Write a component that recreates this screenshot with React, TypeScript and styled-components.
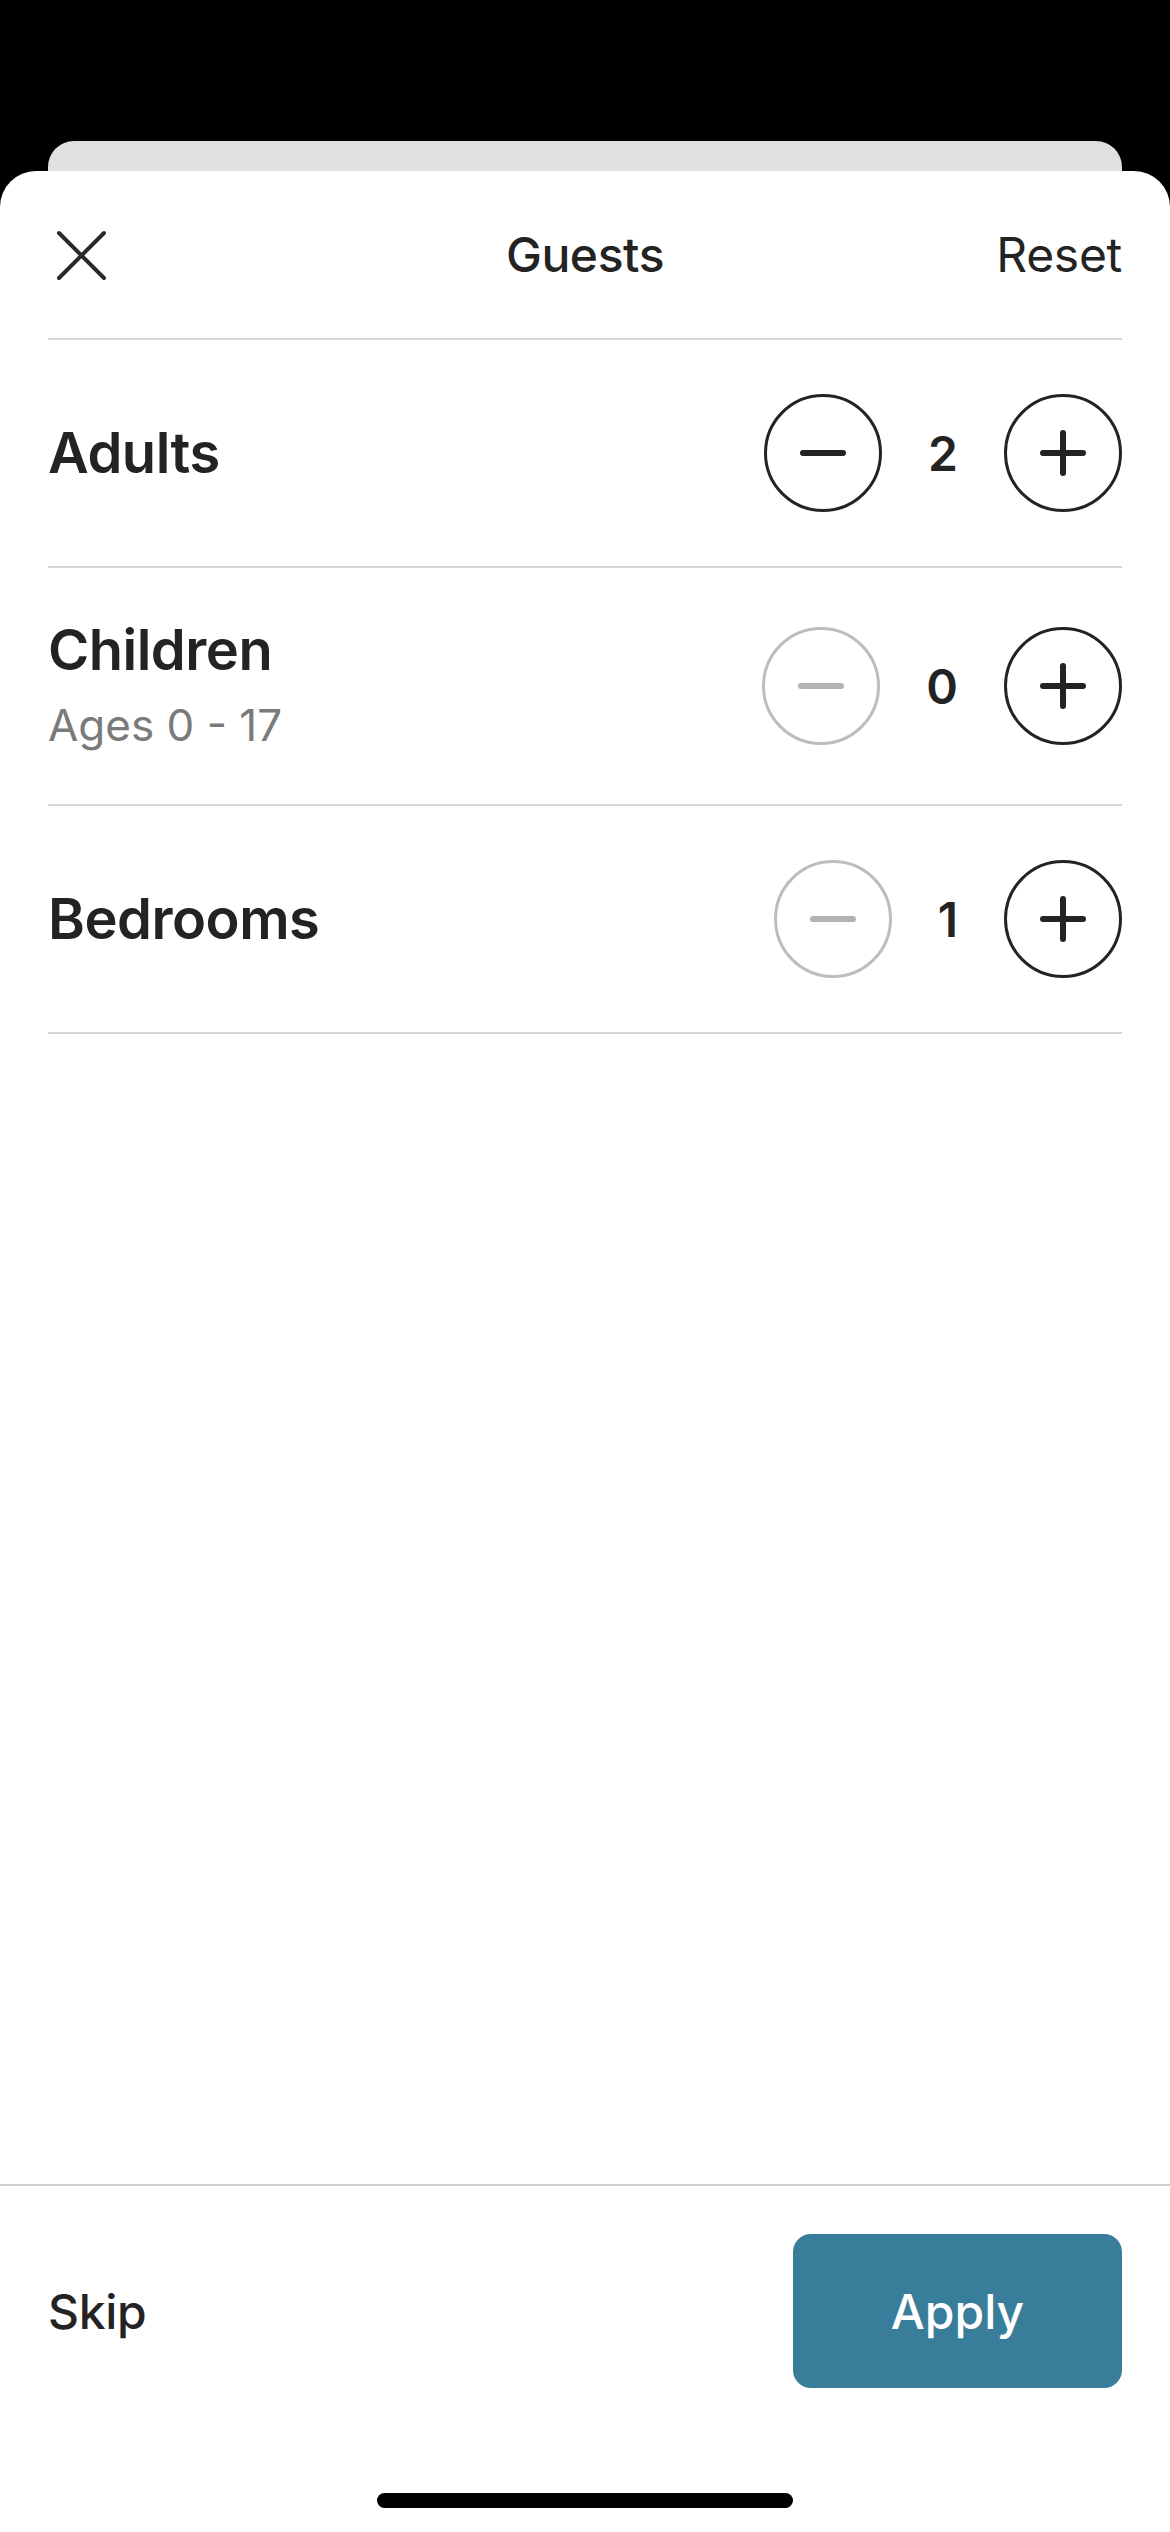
import React, { useState } from "react";
import styled, { createGlobalStyle } from "styled-components";

const GlobalStyle = createGlobalStyle`
  * {
    box-sizing: border-box;
  }
  body {
    margin: 0;
    background: #000;
    font-family: Inter, "Noto Sans", "Liberation Sans", sans-serif;
    color: #232323;
  }
`;

const Page = styled.div`
  min-height: 100vh;
  display: flex;
  flex-direction: column;
  padding-top: 141px;
  background: #000;
`;

const BackCard = styled.div`
  height: 30px;
  margin: 0 48px;
  background: #e0e0e0;
  border-radius: 26px 26px 0 0;
`;

const Sheet = styled.div`
  flex: 1;
  display: flex;
  flex-direction: column;
  background: #fff;
  border-radius: 36px 36px 0 0;
`;

const Header = styled.header`
  height: 169px;
  margin: 0 48px;
  display: grid;
  grid-template-columns: 1fr auto 1fr;
  align-items: center;
  border-bottom: 2px solid #d6d6d6;
`;

const CloseButton = styled.button`
  width: 60px;
  height: 60px;
  padding: 0;
  border: none;
  background: none;
  display: flex;
  justify-self: start;
  cursor: pointer;
`;

const Title = styled.h1`
  margin: 0;
  font-size: 48px;
  font-weight: 550;
  letter-spacing: -0.4px;
`;

const TextButton = styled.button<{ $strong?: boolean }>`
  padding: 0;
  border: none;
  background: none;
  font-family: inherit;
  font-size: 48px;
  font-weight: ${(p) => (p.$strong ? 500 : 400)};
  color: #232323;
  letter-spacing: -0.3px;
  cursor: pointer;
  justify-self: end;
`;

const Row = styled.div`
  margin: 0 48px;
  padding: 54px 0;
  display: flex;
  align-items: center;
  justify-content: space-between;
  border-bottom: 2px solid #d6d6d6;
`;

const LabelBlock = styled.div`
  display: flex;
  flex-direction: column;
`;

const Label = styled.div`
  font-size: 56px;
  font-weight: 600;
  line-height: 56px;
  letter-spacing: -0.5px;
`;

const SubLabel = styled.div`
  margin-top: 26px;
  margin-bottom: 4px;
  font-size: 44px;
  line-height: 42px;
  color: #7a7a7a;
`;

const Counter = styled.div`
  display: flex;
  align-items: center;
  gap: 46px;
`;

const CircleButton = styled.button<{ $disabled?: boolean }>`
  width: 118px;
  height: 118px;
  padding: 0;
  border-radius: 50%;
  border: 3px solid ${(p) => (p.$disabled ? "#bdbdbd" : "#232323")};
  background: #fff;
  color: ${(p) => (p.$disabled ? "#b3b3b3" : "#232323")};
  display: flex;
  align-items: center;
  justify-content: center;
  cursor: ${(p) => (p.$disabled ? "default" : "pointer")};
`;

const Value = styled.span`
  font-size: 48px;
  font-weight: 600;
`;

const Footer = styled.footer`
  margin-top: auto;
  border-top: 2px solid #cfcfcf;
  padding: 48px 48px 24px;
  display: flex;
  flex-direction: column;
`;

const Actions = styled.div`
  display: flex;
  align-items: center;
  justify-content: space-between;
`;

const ApplyButton = styled.button`
  width: 329px;
  height: 154px;
  border: none;
  border-radius: 18px;
  background: #387e9a;
  color: #fff;
  font-family: inherit;
  font-size: 48px;
  font-weight: 500;
  cursor: pointer;
`;

const HomeBar = styled.div`
  width: 416px;
  height: 15px;
  margin: 105px auto 0;
  border-radius: 8px;
  background: #000;
`;

const CloseIcon = () => (
  <svg width="60" height="60" viewBox="0 0 60 60" fill="none">
    <path
      d="M11 8 L56 53 M56 8 L11 53"
      stroke="#2a2a2a"
      strokeWidth="4"
      strokeLinecap="round"
    />
  </svg>
);

const MinusIcon = () => (
  <svg width="48" height="48" viewBox="0 0 48 48" fill="none">
    <path d="M4 24 H44" stroke="currentColor" strokeWidth="6" strokeLinecap="round" />
  </svg>
);

const PlusIcon = () => (
  <svg width="48" height="48" viewBox="0 0 48 48" fill="none">
    <path
      d="M4 24 H44 M24 4 V44"
      stroke="currentColor"
      strokeWidth="6"
      strokeLinecap="round"
    />
  </svg>
);

type Field = "adults" | "children" | "bedrooms";

const fields: { key: Field; label: string; sub?: string; min: number }[] = [
  { key: "adults", label: "Adults", min: 1 },
  { key: "children", label: "Children", sub: "Ages 0 - 17", min: 0 },
  { key: "bedrooms", label: "Bedrooms", min: 1 },
];

const initial = { adults: 2, children: 0, bedrooms: 1 };

export default function App() {
  const [counts, setCounts] = useState<Record<Field, number>>(initial);

  const change = (key: Field, delta: number, min: number) => {
    setCounts((c) => ({ ...c, [key]: Math.max(min, c[key] + delta) }));
  };

  return (
    <Page>
      <GlobalStyle />
      <BackCard />
      <Sheet>
        <Header>
          <CloseButton aria-label="Close">
            <CloseIcon />
          </CloseButton>
          <Title>Guests</Title>
          <TextButton onClick={() => setCounts(initial)}>Reset</TextButton>
        </Header>

        {fields.map((f) => {
          const atMin = counts[f.key] <= f.min;
          return (
            <Row key={f.key}>
              <LabelBlock>
                <Label>{f.label}</Label>
                {f.sub && <SubLabel>{f.sub}</SubLabel>}
              </LabelBlock>
              <Counter>
                <CircleButton $disabled={atMin} onClick={() => change(f.key, -1, f.min)}>
                  <MinusIcon />
                </CircleButton>
                <Value>{counts[f.key]}</Value>
                <CircleButton onClick={() => change(f.key, 1, f.min)}>
                  <PlusIcon />
                </CircleButton>
              </Counter>
            </Row>
          );
        })}

        <Footer>
          <Actions>
            <TextButton $strong>Skip</TextButton>
            <ApplyButton>Apply</ApplyButton>
          </Actions>
          <HomeBar />
        </Footer>
      </Sheet>
    </Page>
  );
}
